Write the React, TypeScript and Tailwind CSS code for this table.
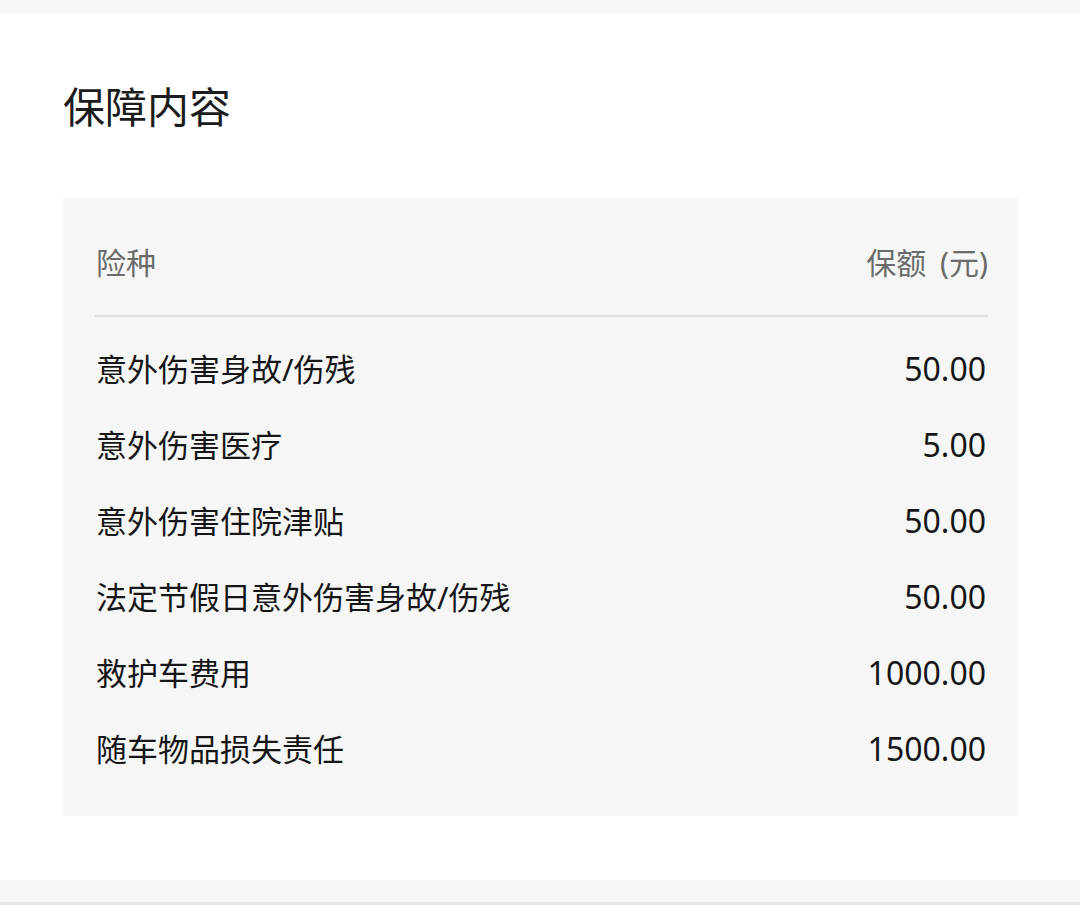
const rows = [
  { name: "意外伤害身故/伤残", amount: "50.00" },
  { name: "意外伤害医疗", amount: "5.00" },
  { name: "意外伤害住院津贴", amount: "50.00" },
  { name: "法定节假日意外伤害身故/伤残", amount: "50.00" },
  { name: "救护车费用", amount: "1000.00" },
  { name: "随车物品损失责任", amount: "1500.00" },
];

const font = "font-['Noto_Sans','Noto_Sans_CJK_SC',sans-serif]";

export default function App() {
  return (
    <div className={`min-h-[905px] bg-[#f5f5f5] pt-[13px] ${font}`}>
      <div className="bg-white pl-[63px] pr-[62px] pt-[73px] pb-[64px]">
        <h1 className="text-[42px] leading-none text-[#1c1c1c]">保障内容</h1>

        <div className="mt-[70px] bg-[#f6f6f6] pl-[33px] pr-[30px] pt-[50px] pb-[29px]">
          <div className="flex justify-between items-center h-[30px] text-[30px] leading-none text-[#6b6b6b]">
            <span>险种</span>
            <span className="[word-spacing:6px]">保额 (元)</span>
          </div>
          <div className="mt-[37px] h-[2px] bg-[#dedede] -ml-px" />
          <div className="mt-[14px]">
            {rows.map((r) => (
              <div key={r.name} className="flex justify-between items-center h-[76px] text-[31px] text-[#161616]">
                <span>{r.name}</span>
                <span className="text-[32px] pr-[2px]">{r.amount}</span>
              </div>
            ))}
          </div>
        </div>
      </div>
      <div className="h-[22px]" />
      <div className="h-[3px] bg-[#e6e6e6]" />
    </div>
  );
}
